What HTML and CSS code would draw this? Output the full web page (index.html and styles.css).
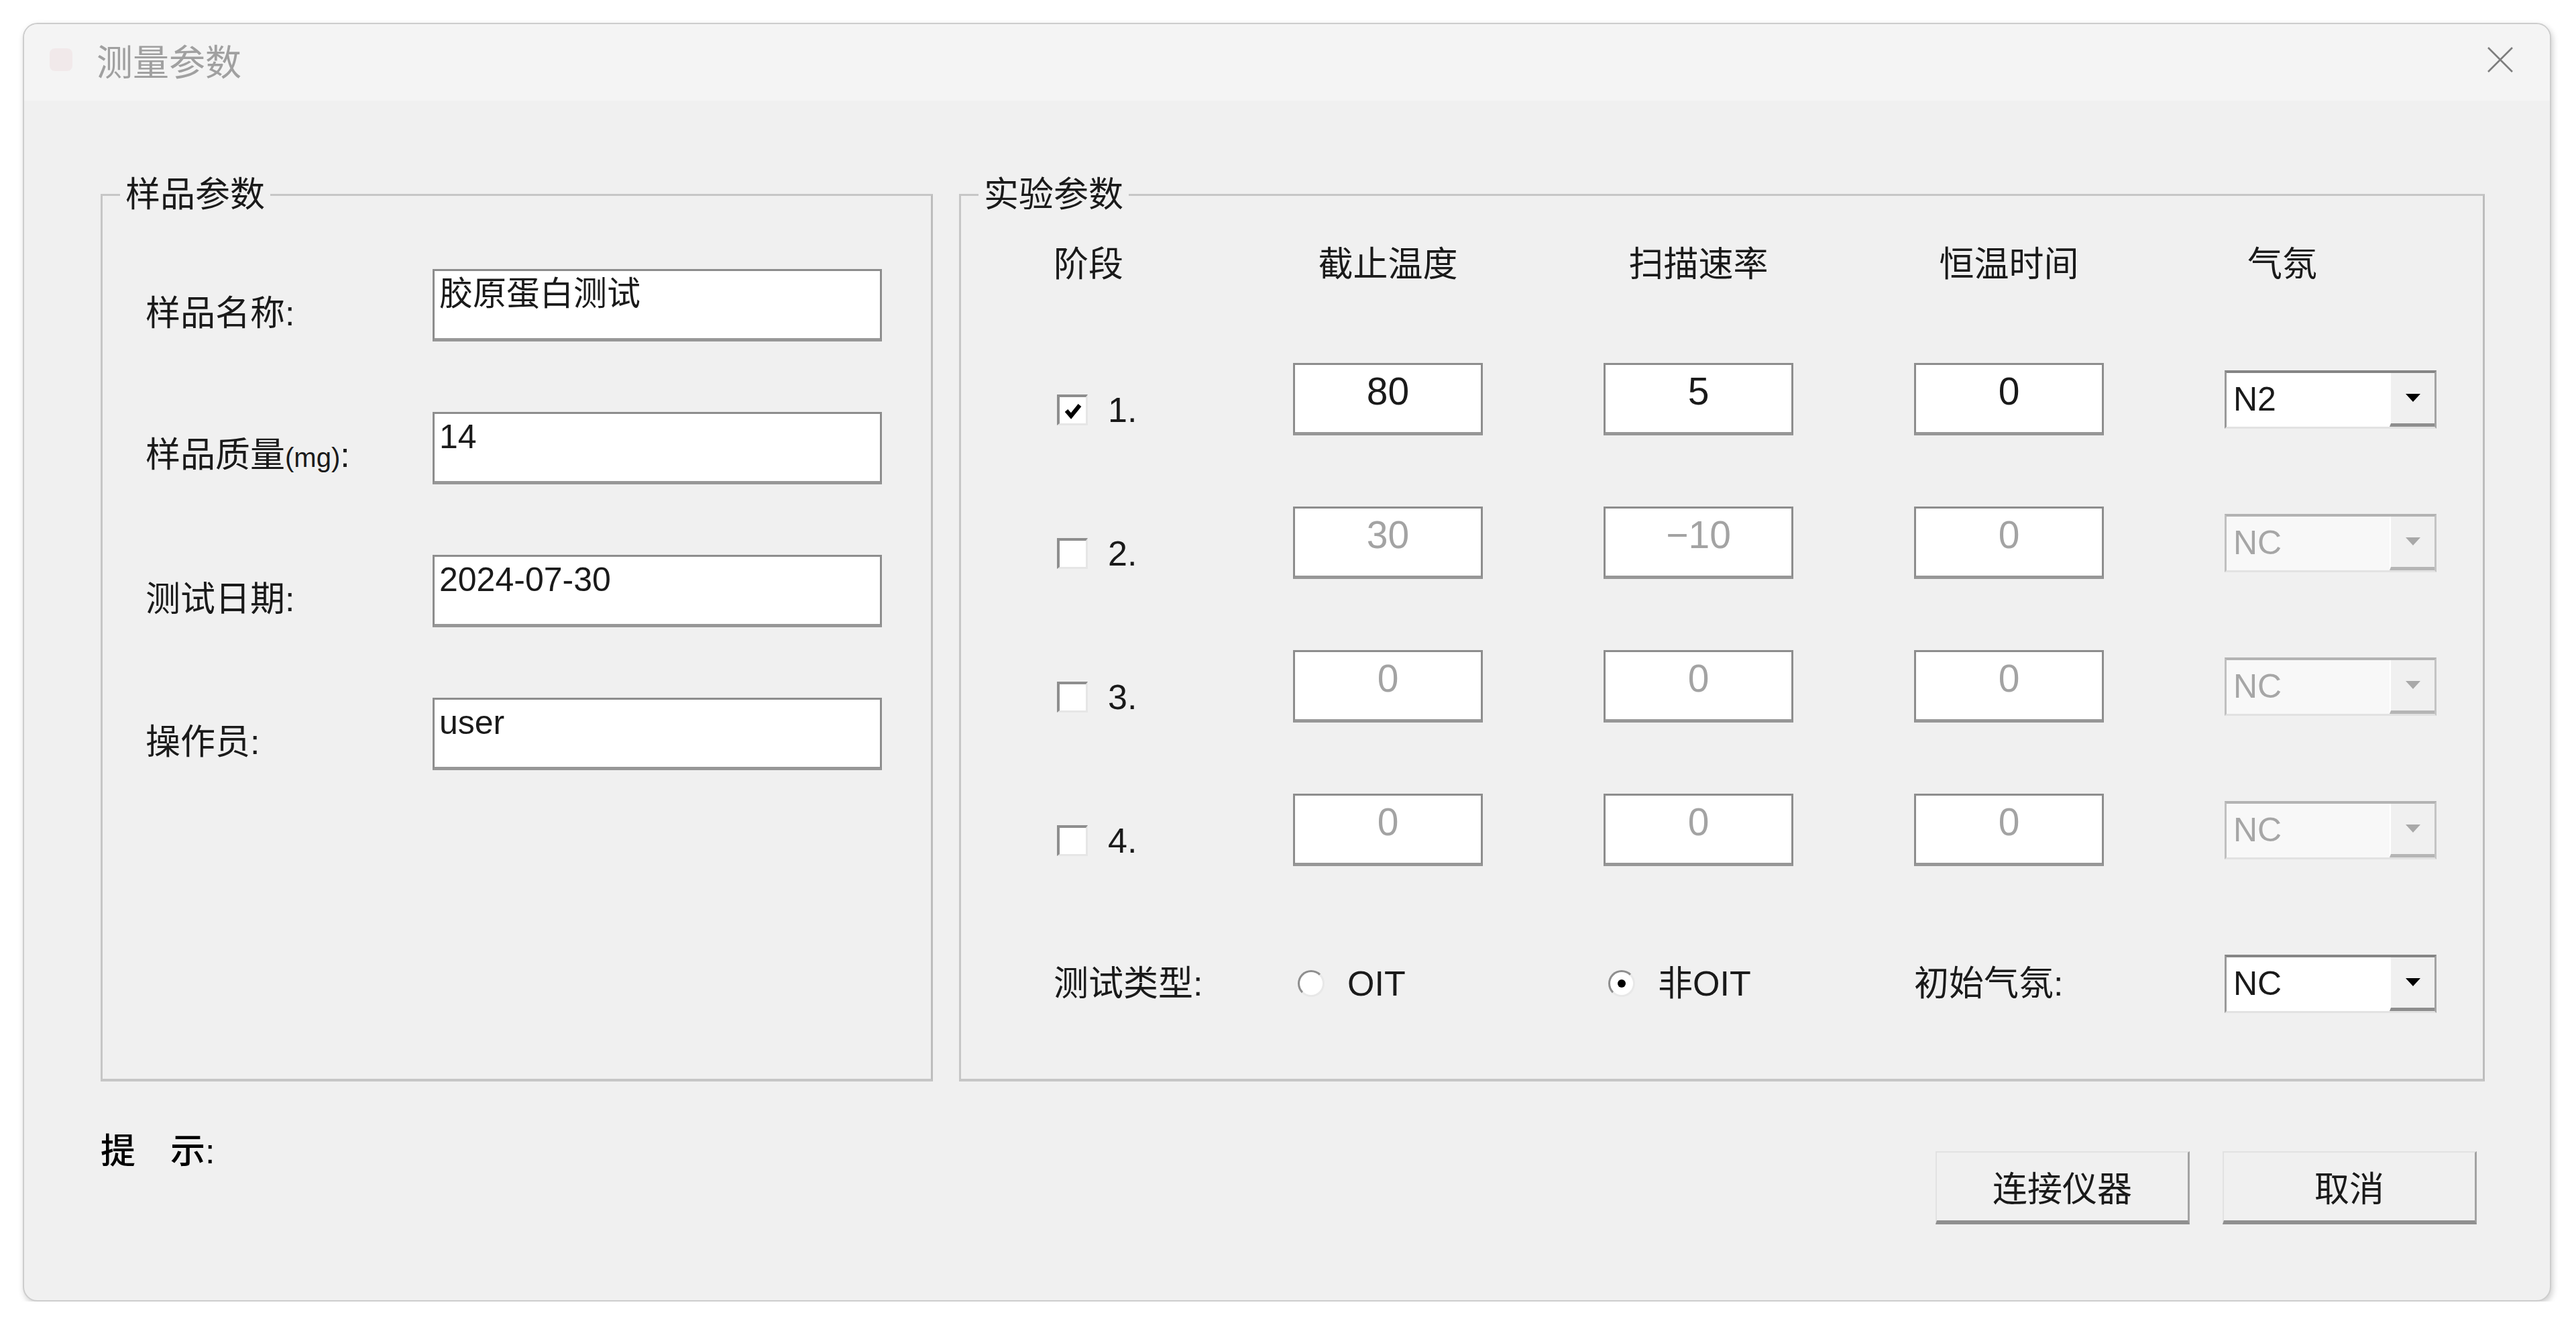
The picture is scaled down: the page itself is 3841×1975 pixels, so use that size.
FILE: index.html
```html
<!DOCTYPE html>
<html lang="zh-CN">
<head>
<meta charset="utf-8">
<title>测量参数</title>
<link rel="stylesheet" href="styles.css">
</head>
<body>
<div class="window">
  <div class="titlebar">
    <span class="app-icon"></span>
    <span class="title">测量参数</span>
    <span class="close">
      <svg width="40" height="40" viewBox="0 0 40 40"><path d="M2 2 L38 38 M38 2 L2 38" stroke="#7d7d7d" stroke-width="2.6" fill="none"/></svg>
    </span>
  </div>
  <div class="content">
    <div class="groups">
      <fieldset class="group group-sample">
        <legend>样品参数</legend>
        <div class="sample-grid">
          <div class="label">样品名称:</div><div class="field">胶原蛋白测试</div>
          <div class="label">样品质量<span class="unit">(mg)</span>:</div><div class="field">14</div>
          <div class="label">测试日期:</div><div class="field">2024-07-30</div>
          <div class="label">操作员:</div><div class="field">user</div>
        </div>
      </fieldset>
      <fieldset class="group group-exp">
        <legend>实验参数</legend>
        <div class="exp-grid">
          <div class="hdr hdr-stage">阶段</div>
          <div class="hdr">截止温度</div>
          <div class="hdr">扫描速率</div>
          <div class="hdr">恒温时间</div>
          <div class="hdr hdr-gas">气氛</div>

          <div class="stage"><span class="check"><svg width="30" height="30" viewBox="0 0 30 30"><path d="M5 15 L12 23 L25 7" stroke="#000" stroke-width="6" fill="none"/></svg></span><span>1.</span></div>
          <div class="field num">80</div>
          <div class="field num">5</div>
          <div class="field num">0</div>
          <div class="select"><span class="val">N2</span><span class="btn"><svg width="22" height="12" viewBox="0 0 22 12"><polygon points="0,0 22,0 11,12" fill="#000"/></svg></span></div>

          <div class="stage"><span class="check"></span><span>2.</span></div>
          <div class="field num dis">30</div>
          <div class="field num dis">−10</div>
          <div class="field num dis">0</div>
          <div class="select disabled"><span class="val">NC</span><span class="btn"><svg width="22" height="12" viewBox="0 0 22 12"><polygon points="0,0 22,0 11,12" fill="#a8a8a8"/></svg></span></div>

          <div class="stage"><span class="check"></span><span>3.</span></div>
          <div class="field num dis">0</div>
          <div class="field num dis">0</div>
          <div class="field num dis">0</div>
          <div class="select disabled"><span class="val">NC</span><span class="btn"><svg width="22" height="12" viewBox="0 0 22 12"><polygon points="0,0 22,0 11,12" fill="#a8a8a8"/></svg></span></div>

          <div class="stage"><span class="check"></span><span>4.</span></div>
          <div class="field num dis">0</div>
          <div class="field num dis">0</div>
          <div class="field num dis">0</div>
          <div class="select disabled"><span class="val">NC</span><span class="btn"><svg width="22" height="12" viewBox="0 0 22 12"><polygon points="0,0 22,0 11,12" fill="#a8a8a8"/></svg></span></div>

          <div class="blabel">测试类型:</div>
          <div class="radio-item"><span class="radio"></span><span>OIT</span></div>
          <div class="radio-item"><span class="radio on"></span><span>非OIT</span></div>
          <div class="blabel">初始气氛:</div>
          <div class="select"><span class="val">NC</span><span class="btn"><svg width="22" height="12" viewBox="0 0 22 12"><polygon points="0,0 22,0 11,12" fill="#000"/></svg></span></div>
        </div>
      </fieldset>
    </div>
    <div class="footer">
      <div class="hint">提　示:</div>
      <div class="buttons">
        <button class="btn-win">连接仪器</button>
        <button class="btn-win">取消</button>
      </div>
    </div>
  </div>
</div>
</body>
</html>
```
FILE: styles.css
```css
html, body {
  margin: 0;
  padding: 0;
  background: #ffffff;
}

body {
  font-family: "Liberation Sans", "Noto Sans CJK SC", sans-serif;
  font-size: 52px;
  color: #1a1a1a;
}

.window {
  margin: 34px 0 0 34px;
  width: 3770px;
  height: 1906px;
  box-sizing: border-box;
  border: 2px solid #cdcdcd;
  border-radius: 22px;
  background: #f0f0f0;
  box-shadow: 2px 4px 10px rgba(0, 0, 0, 0.2);
  display: flex;
  flex-direction: column;
  overflow: hidden;
}

.titlebar {
  flex: none;
  height: 114px;
  box-sizing: border-box;
  padding-bottom: 8px;
  display: flex;
  align-items: center;
  background: #f4f4f4;
}

.app-icon {
  width: 34px;
  height: 34px;
  margin-left: 38px;
  border-radius: 8px;
  background: #f1e9ea;
}

.title {
  margin-left: 36px;
  font-size: 54px;
  color: #a0a0a0;
}

.close {
  margin-left: auto;
  margin-right: 54px;
  width: 40px;
  height: 40px;
  display: flex;
}

.content {
  flex: 1;
  padding: 109px 97px 0 114px;
  display: flex;
  flex-direction: column;
}

.groups {
  display: flex;
  gap: 39px;
  height: 1353px;
}

.group {
  margin: 0;
  padding: 0;
  min-width: 0;
  box-sizing: border-box;
  border: 3px solid #c6c6c6;
  border-bottom-width: 4px;
  border-right-color: #bdbdbd;
}

.group legend {
  margin-left: 26px;
  padding: 0 8px;
  line-height: 62px;
  font-size: 52px;
}

.group-sample {
  width: 1241px;
}

.group-exp {
  width: 2275px;
}

.sample-grid {
  display: grid;
  grid-template-columns: 428px 670px;
  grid-auto-rows: 108px;
  row-gap: 105px;
  margin: 80px 0 0 64px;
}

.label {
  align-self: center;
  padding-top: 24px;
  line-height: 62px;
  white-space: nowrap;
}

.unit {
  font-size: 40px;
}

.field {
  box-sizing: border-box;
  height: 108px;
  background: #ffffff;
  border: 3px solid #8d8d8d;
  border-bottom: 5px solid #979797;
  padding: 3px 7px 0;
  line-height: 62px;
  white-space: nowrap;
  overflow: hidden;
  font-size: 50px;
}

.field.num {
  text-align: center;
  padding-top: 8px;
  font-size: 57px;
}

.field.dis {
  color: #a3a3a3;
}

.exp-grid {
  display: grid;
  grid-template-columns: 177px 283px 283px 283px 316px;
  column-gap: 180px;
  grid-template-rows: 72px 108px 108px 108px 108px 138px;
  row-gap: 106px;
  margin: 42px 0 0 138px;
}

.hdr {
  align-self: start;
  line-height: 62px;
  text-align: center;
  white-space: nowrap;
}

.hdr-stage {
  text-align: left;
}

.hdr-gas {
  text-align: left;
  padding-left: 34px;
}

.stage {
  display: flex;
  align-items: center;
  gap: 30px;
  padding-top: 32px;
  padding-left: 5px;
  line-height: 62px;
}

.check {
  width: 46px;
  height: 46px;
  box-sizing: border-box;
  background: #ffffff;
  border-top: 4px solid #8e8e8e;
  border-left: 4px solid #8e8e8e;
  border-right: 3px solid #e6e6e6;
  border-bottom: 3px solid #e6e6e6;
  display: flex;
  align-items: center;
  justify-content: center;
}

.select {
  align-self: center;
  height: 87px;
  box-sizing: border-box;
  display: flex;
  background: #ffffff;
  border-top: 4px solid #858585;
  border-left: 3px solid #9a9a9a;
  border-right: 3px solid #a3a3a3;
  border-bottom: 3px solid #e2e2e2;
}

.select .val {
  flex: 1;
  padding-left: 10px;
  line-height: 78px;
  font-size: 50px;
}

.select .btn {
  width: 67px;
  box-sizing: border-box;
  background: #f0f0f0;
  border-left: 2px solid #ffffff;
  border-bottom: 5px solid #8e8e8e;
  display: flex;
  align-items: center;
  justify-content: center;
}

.select.disabled {
  background: #f8f8f8;
  border-top-color: #b3b3b3;
  border-left-color: #c0c0c0;
  border-right-color: #c4c4c4;
}

.select.disabled .val {
  color: #a6a6a6;
}

.select.disabled .btn {
  border-bottom-color: #b5b5b5;
}

.blabel {
  align-self: center;
  line-height: 62px;
  white-space: nowrap;
}

.radio-item {
  align-self: center;
  display: flex;
  align-items: center;
  gap: 34px;
  padding-left: 7px;
  line-height: 62px;
  white-space: nowrap;
}

.radio {
  width: 40px;
  height: 40px;
  box-sizing: border-box;
  border-radius: 50%;
  background: #ffffff;
  border: 3px solid;
  border-color: #8e8e8e #e8e8e8 #e8e8e8 #8e8e8e;
  display: flex;
  align-items: center;
  justify-content: center;
}

.radio.on::after {
  content: "";
  width: 12px;
  height: 12px;
  border-radius: 50%;
  background: #000000;
}

.footer {
  display: flex;
  justify-content: space-between;
  align-items: flex-start;
  margin-top: 73px;
  padding-right: 12px;
}

.hint {
  line-height: 62px;
  font-weight: 500;
  color: #000000;
}

.buttons {
  display: flex;
  gap: 49px;
  margin-top: 31px;
}

.btn-win {
  width: 379px;
  height: 109px;
  box-sizing: border-box;
  background: #f0f0f0;
  font-family: "Liberation Sans", "Noto Sans CJK SC", sans-serif;
  font-size: 52px;
  color: #1a1a1a;
  border-top: 2px solid #e2e2e2;
  border-left: 2px solid #e2e2e2;
  border-right: 3px solid #a3a3a3;
  border-bottom: 6px solid #8f8f8f;
  padding: 0;
}
```
